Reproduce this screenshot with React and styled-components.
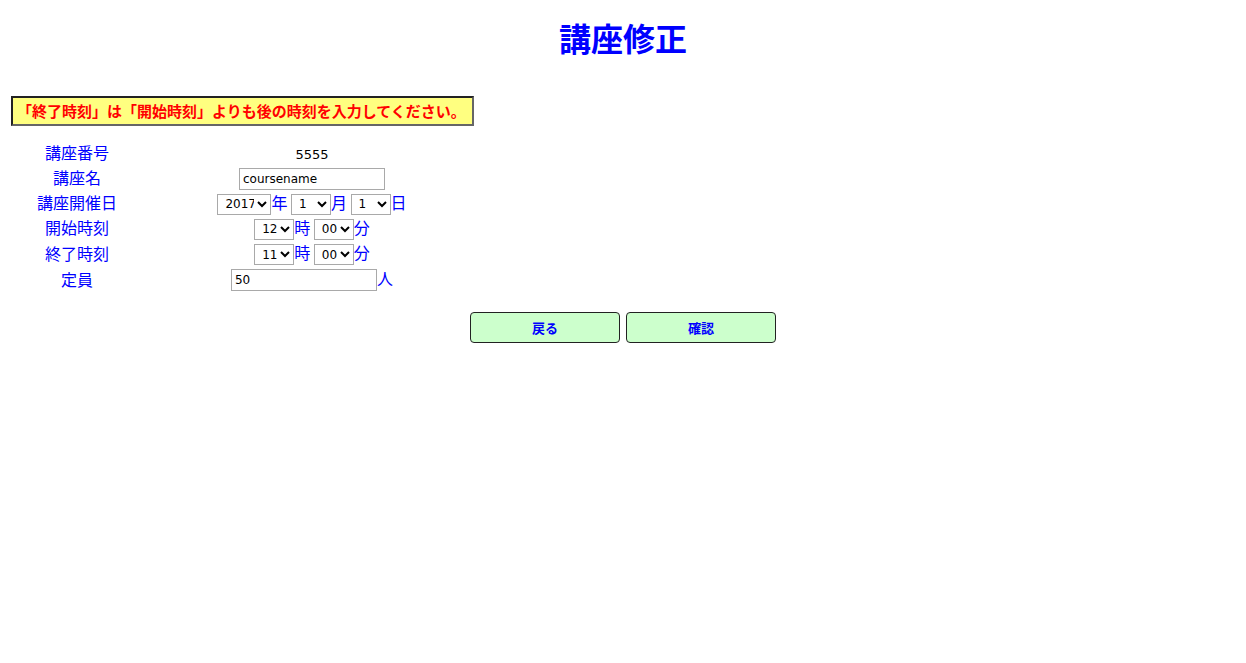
import React from 'react';
import styled, { createGlobalStyle } from 'styled-components';

const GlobalStyle = createGlobalStyle`
    body {
        margin: 8px;
        background: #ffffff;
        font-family: "Noto Sans CJK JP", "DejaVu Sans", sans-serif;
    }
`;

const years = ['2015', '2016', '2017', '2018', '2019'];
const months = Array.from({length: 12}, (_, i) => String(i + 1));
const days = Array.from({length: 31}, (_, i) => String(i + 1));
const hours = Array.from({length: 24}, (_, i) => String(i));
const minutes = ['00', '15', '30', '45'];

function Picker({options, value, width}) {
    return (
        <Select $w={width} defaultValue={value}>
            {options.map(o => <option key={o} value={o}>{o}</option>)}
        </Select>
    );
}

export default function App() {
    return (
        <Page>
            <GlobalStyle />
            <Title>講座修正</Title>

            <ErrorBox>「終了時刻」は「開始時刻」よりも後の時刻を入力してください。</ErrorBox>

            <FormTable>
                <tbody>
                    <tr>
                        <Label>講座番号</Label>
                        <Value><Plain>5555</Plain></Value>
                    </tr>
                    <tr>
                        <Label>講座名</Label>
                        <Value><TextInput defaultValue="coursename" /></Value>
                    </tr>
                    <tr>
                        <Label>講座開催日</Label>
                        <Value>
                            <Picker options={years} value="2017" width={54} /><Unit>年</Unit>{' '}
                            <Picker options={months} value="1" width={40} /><Unit>月</Unit>{' '}
                            <Picker options={days} value="1" width={40} /><Unit>日</Unit>
                        </Value>
                    </tr>
                    <tr>
                        <Label>開始時刻</Label>
                        <Value>
                            <Picker options={hours} value="12" width={40} /><Unit>時</Unit>{' '}
                            <Picker options={minutes} value="00" width={40} /><Unit>分</Unit>
                        </Value>
                    </tr>
                    <tr>
                        <Label>終了時刻</Label>
                        <Value>
                            <Picker options={hours} value="11" width={40} /><Unit>時</Unit>{' '}
                            <Picker options={minutes} value="00" width={40} /><Unit>分</Unit>
                        </Value>
                    </tr>
                    <tr>
                        <Label $h={27}>定員</Label>
                        <Value><TextInput defaultValue="50" /><Unit>人</Unit></Value>
                    </tr>
                </tbody>
            </FormTable>

            <ButtonRow>
                <Button type="button">戻る</Button>
                <Button type="button">確認</Button>
            </ButtonRow>
        </Page>
    );
}

const Page = styled.div`
    display: flex;
    flex-direction: column;
`;

const Title = styled.h1`
    margin: 10px 0 0;
    height: 38px;
    line-height: 38px;
    text-align: center;
    font-size: 32px;
    font-weight: bold;
    color: #0000ff;
`;

const ErrorBox = styled.div`
    align-self: flex-start;
    margin: 40px 0 0 3px;
    width: 455px;
    height: 26px;
    line-height: 26px;
    padding-left: 4px;
    box-sizing: content-box;
    background: #ffff80;
    border: 2px solid #222;
    border-right-color: #666;
    border-bottom-color: #666;
    color: #ff0000;
    font-size: 15px;
    font-weight: bold;
    white-space: nowrap;
`;

const FormTable = styled.table`
    margin: 13px 0 0 2px;
    border-collapse: collapse;
    width: 470px;
`;

const Label = styled.td`
    width: 134px;
    height: ${p => p.$h || 25}px;
    padding: 0;
    text-align: center;
    vertical-align: middle;
    color: #0000ff;
    font-size: 16px;
`;

const Value = styled.td`
    padding: 0;
    text-align: center;
    vertical-align: middle;
    white-space: nowrap;
    font-size: 16px;
`;

const Plain = styled.span`
    color: #000;
    font-family: "DejaVu Sans", sans-serif;
    font-size: 13px;
`;

const Unit = styled.span`
    color: #0000ff;
    font-size: 16px;
`;

const TextInput = styled.input`
    width: 146px;
    height: 22px;
    box-sizing: border-box;
    border: 1px solid #a9a9a9;
    padding: 0 3px;
    font-family: "DejaVu Sans", sans-serif;
    font-size: 12px;
    color: #000;
    vertical-align: middle;
`;

const Select = styled.select`
    width: ${p => p.$w}px;
    height: 21px;
    box-sizing: border-box;
    border: 1px solid #a9a9a9;
    border-radius: 0;
    background: #fff;
    font-family: "DejaVu Sans", sans-serif;
    font-size: 12px;
    color: #000;
    padding: 0 0 0 3px;
    vertical-align: middle;
`;

const ButtonRow = styled.div`
    display: flex;
    justify-content: center;
    gap: 6px;
    margin-top: 20px;
`;

const Button = styled.button`
    width: 150px;
    height: 31px;
    background: #ccffcc;
    border: 1px solid #222;
    border-radius: 4px;
    color: #0000ff;
    font-family: "Noto Sans CJK JP", sans-serif;
    font-size: 13px;
    font-weight: bold;
    cursor: pointer;
`;
